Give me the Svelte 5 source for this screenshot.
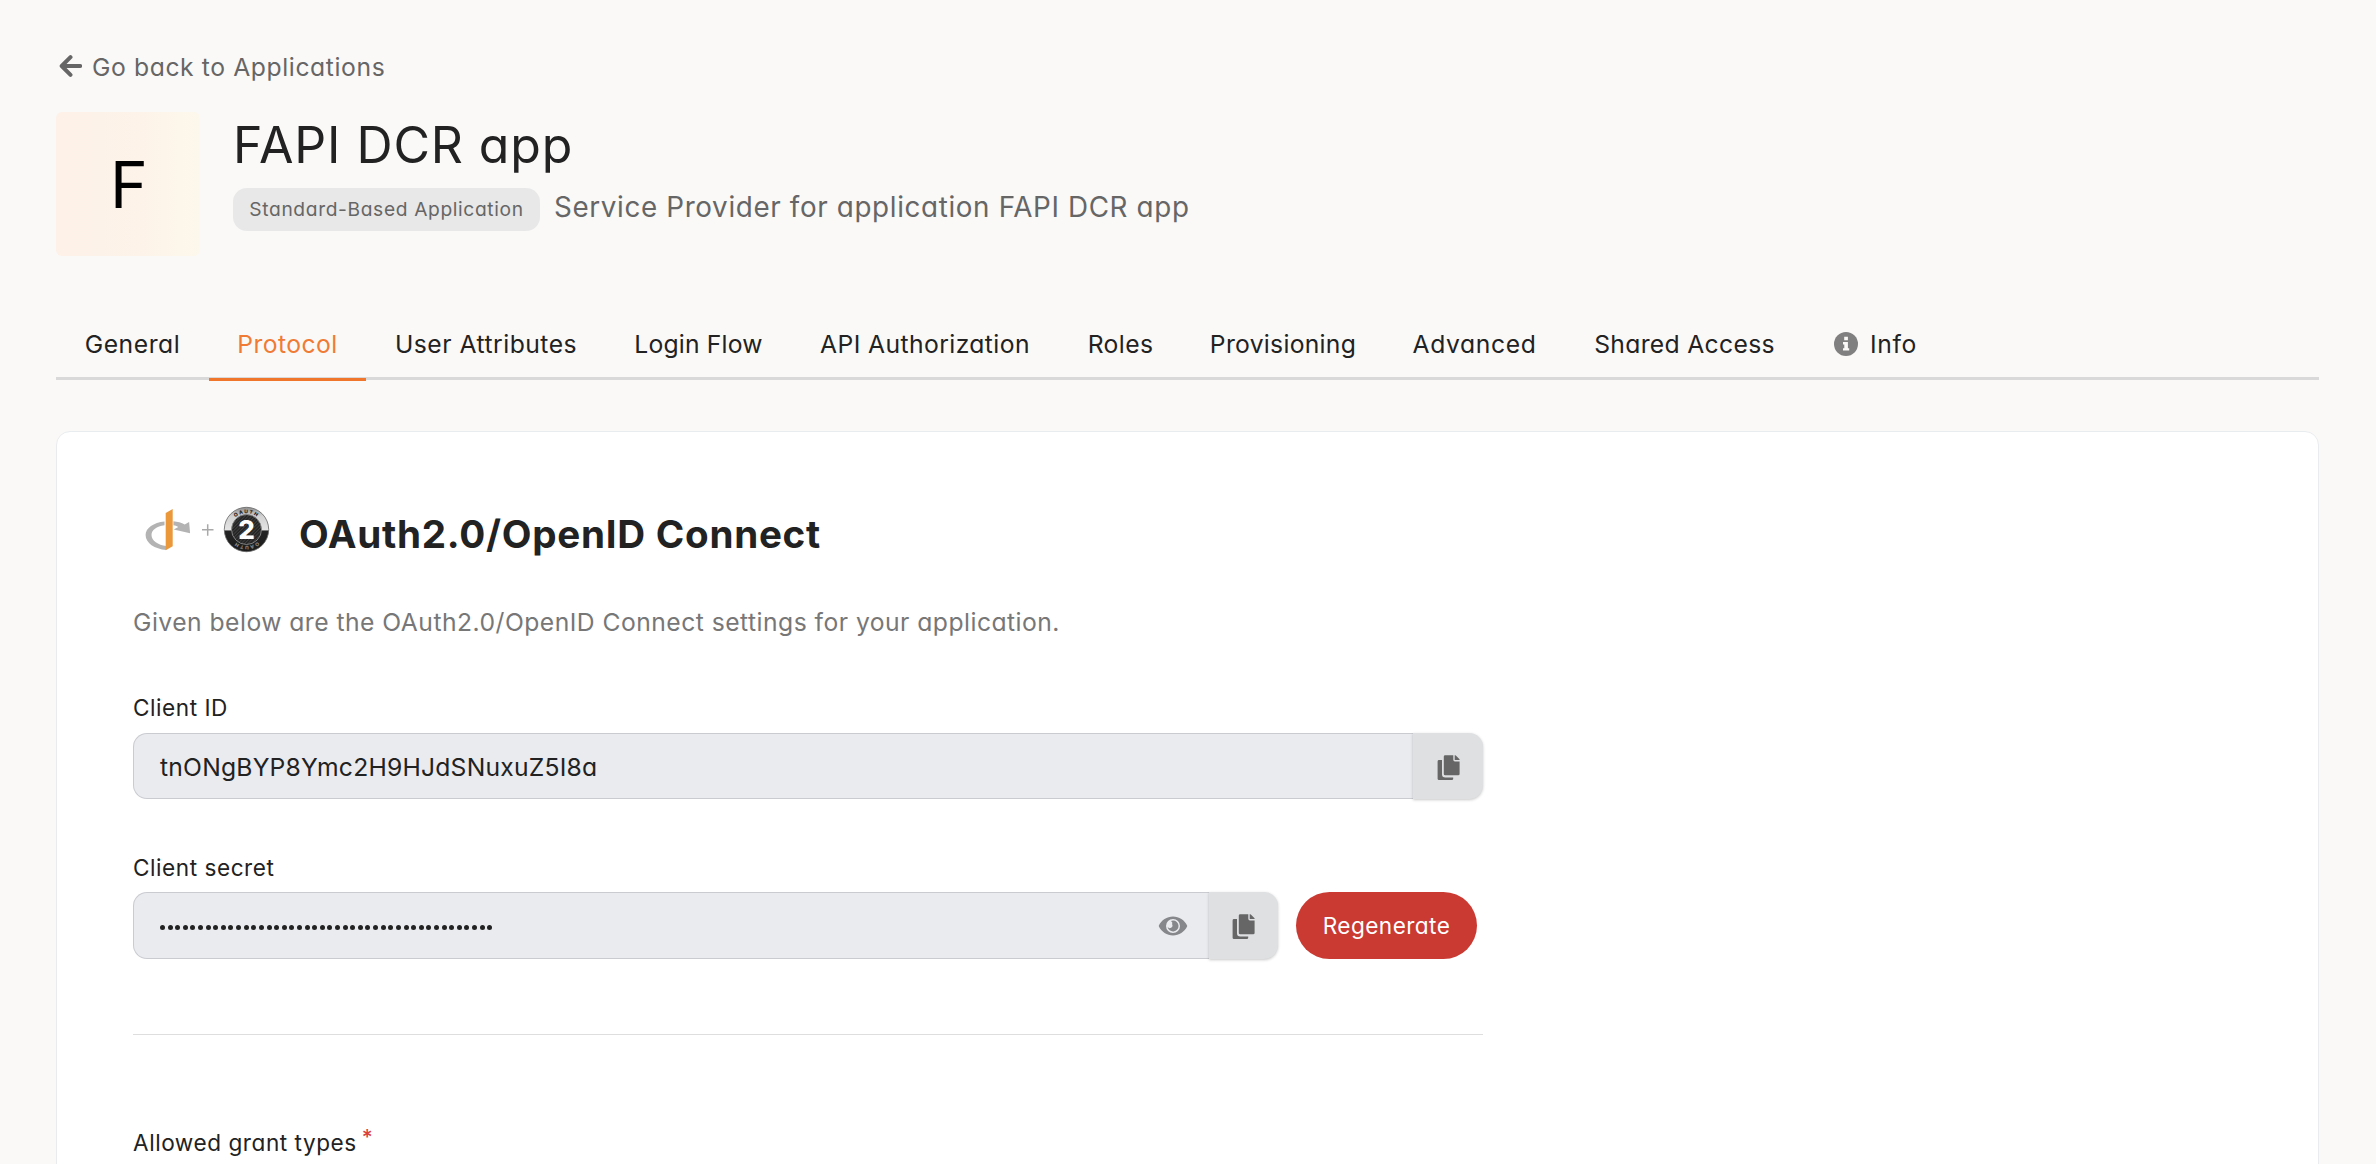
<script>
  // Each tab carries its width and the tracking of its label.
  const tabs = [
    { label: 'General', width: 153, track: 0.55 },
    { label: 'Protocol', width: 157, track: 0.45 },
    { label: 'User Attributes', width: 240, track: 0.49 },
    { label: 'Login Flow', width: 185, track: 0.2 },
    { label: 'API Authorization', width: 268, track: 0.4 },
    { label: 'Roles', width: 123, track: 0.4 },
    { label: 'Provisioning', width: 202, track: 0.28 },
    { label: 'Advanced', width: 181, track: 0.62 },
    { label: 'Shared Access', width: 239, track: 0.32 },
    { label: 'Info', width: 143, track: 0.6, icon: true }
  ];
  let active = $state('Protocol');
  const secretDots = Array.from({ length: 44 }, (_, i) => i);
</script>

{#snippet copyIcon()}
  <svg class="copy-icon" viewBox="0 0 23 26" aria-hidden="true">
    <path d="M2 5h3v14.2A3.3 3.3 0 0 0 8.3 22.500H16.200V23.700A1.400 1.400 0 0 1 14.800 25.100H2A1.400 1.400 0 0 1 .6 23.700V6.400A1.400 1.400 0 0 1 2 5z" />
    <path d="M8.200.2h8.100v4.600a1.600 1.600 0 0 0 1.600 1.600h4.700v12.500a1.400 1.400 0 0 1-1.400 1.400h-13a1.400 1.400 0 0 1-1.400-1.400V1.600A1.400 1.400 0 0 1 8.200.2z" />
    <path d="M17.700.2h.5q.3 0 .6.3l3.500 3.500q.3.3.3.6v.5h-4.900z" />
  </svg>
{/snippet}

<div class="page">
  <a class="back" href="#applications">
    <svg viewBox="0 0 24 24" aria-hidden="true">
      <path d="M12.500 3.200 3.700 12l8.800 8.800M4 12h18.200" />
    </svg>
    <span>Go back to Applications</span>
  </a>

  <header>
    <div class="avatar">F</div>
    <div class="head-text">
      <h1>FAPI DCR app</h1>
      <div class="sub">
        <span class="pill">Standard-Based Application</span>
        <span class="desc">Service Provider for application FAPI DCR app</span>
      </div>
    </div>
  </header>

  <nav>
    {#each tabs as tab}
      <button
        class="tab"
        class:active={active === tab.label}
        style="width: {tab.width}px; letter-spacing: {tab.track}px"
        onclick={() => (active = tab.label)}
      >
        {#if tab.icon}
          <svg viewBox="0 0 24 24" aria-hidden="true">
            <circle cx="12" cy="12" r="12" />
            <path d="M10.200 4.800h3.700v3.500h-3.700zM9 10h4.900v6.200h1.300v2.400H9v-2.400h1.300v-3.800H9z" />
          </svg>
        {/if}
        <span>{tab.label}</span>
      </button>
    {/each}
  </nav>

  <main>
    <div class="title">
      <svg class="logos" viewBox="143 500 130 60" aria-hidden="true">
        <defs>
          <linearGradient id="rim" x1="0" y1="0" x2="0" y2="1">
            <stop offset="0" stop-color="#8d8d8d" />
            <stop offset=".2" stop-color="#d2d2d2" />
            <stop offset=".5" stop-color="#e4e4e4" />
            <stop offset=".54" stop-color="#242424" />
            <stop offset="1" stop-color="#1c1c1c" />
          </linearGradient>
          <pattern id="mesh" width="2.400" height="2.400" patternUnits="userSpaceOnUse" patternTransform="rotate(45)">
            <rect width="2.400" height="2.400" fill="#202020" />
            <rect width="1.100" height="2.400" fill="#3f3f3f" />
          </pattern>
          <path id="arc-top" d="M230.200 529.500a16.300 16.300 0 0 1 32.600 0" />
          <path id="arc-bottom" d="M262.800 529.500a16.300 16.300 0 0 1-32.600 0" />
        </defs>
        <path
          fill="#b3b3b3"
          d="M164.500 521.400v3.800c-8 1.200-13 4.900-13 9.700 0 5.600 6.500 10 14.700 11.100v4c-11.600-1-20.600-7-20.600-15 0-7.200 8-12.500 18.900-13.600zM173.400 521.300c4.200.4 8 1.500 11.300 3.200l4.400-2.600 1 11.300-16.400-3.600 4.600-2.700c-1.600-.8-3.200-1.300-4.900-1.600z"
        />
        <path fill="#eb983b" d="m165.700 513 7-4v37.300l-7 3.900z" />
        <path stroke="#a9a9a9" stroke-width="1.500" fill="none" d="M202 529.800h11.500M207.700 524.200v11.500" />
        <circle cx="246.500" cy="529.500" r="22.200" fill="url(#rim)" stroke="#666" stroke-width=".8" />
        <circle cx="246.500" cy="529.500" r="15" fill="url(#mesh)" stroke="#888" stroke-width=".9" />
        <text class="ring dark"><textPath href="#arc-top" startOffset="50%" text-anchor="middle">OAUTH</textPath></text>
        <text class="ring light"><textPath href="#arc-bottom" startOffset="50%" text-anchor="middle">OAUTH</textPath></text>
        <text class="two" x="246.500" y="538.900" text-anchor="middle">2</text>
      </svg>
      <h2>OAuth2.0/OpenID Connect</h2>
    </div>

    <p class="intro">Given below are the OAuth2.0/OpenID Connect settings for your application.</p>

    <div class="form">
      <div class="label">Client ID</div>
      <div class="row first">
        <div class="field">tnONgBYP8Ymc2H9HJdSNuxuZ5I8a</div>
        <button class="copy" aria-label="Copy client ID">{@render copyIcon()}</button>
      </div>

      <div class="label">Client secret</div>
      <div class="row second">
        <div class="field">
          <div class="dots">
            {#each secretDots as dot (dot)}<i></i>{/each}
          </div>
          <svg class="eye" viewBox="0 0 30 20" aria-hidden="true">
            <path
              fill-rule="evenodd"
              d="M.7 10C3.400 4 9 .6 15 .6S26.600 4 29.300 10C26.600 16 21 19.400 15 19.400S3.400 16 .7 10zM15 3a7 7 0 1 0 0 14 7 7 0 0 0 0-14z"
            />
            <path d="M15 4.500a5.500 5.500 0 1 1-5.400 6.300 2.600 2.600 0 0 0 4.500-2.600A2.600 2.600 0 0 0 13 4.900 5.500 5.500 0 0 1 15 4.500z" />
          </svg>
        </div>
        <button class="copy" aria-label="Copy client secret">{@render copyIcon()}</button>
        <button class="regenerate">Regenerate</button>
      </div>

      <hr />

      <div class="label">Allowed grant types<sup>*</sup></div>
    </div>
  </main>
</div>

<style>
  :global(body) {
    background: #faf9f8;
    overflow: hidden;
  }
  .page {
    box-sizing: border-box;
    width: 2376px;
    height: 1164px;
    padding: 52px 57px 0 56px;
    display: flex;
    flex-direction: column;
    overflow: hidden;
    color: #222;
    font-family: Inter, sans-serif;
    font-weight: 400;
    font-feature-settings: 'cv11';
    white-space: nowrap;
  }
  .page > * {
    flex: none;
  }
  button {
    font: inherit;
    font-feature-settings: inherit;
    color: inherit;
    border: 0;
    padding: 0;
    background: none;
  }
  .back {
    display: flex;
    align-items: center;
    height: 30px;
    padding-left: 2px;
    font-size: 24.700px;
    line-height: 30px;
    letter-spacing: 0.600px;
    color: #666;
    text-decoration: none;
  }
  .back svg {
    width: 24px;
    height: 24px;
    margin: -3px 10px 0 0;
    fill: none;
    stroke: #666;
    stroke-width: 4;
    stroke-linecap: round;
    stroke-linejoin: round;
  }
  .back span {
    margin-top: -1px;
  }
  header {
    display: flex;
    height: 144px;
    margin-top: 30px;
  }
  .avatar {
    width: 144px;
    height: 144px;
    border-radius: 6px;
    background: linear-gradient(90deg, #fdf1e8, #fdf3e9 60%, #fdf8ec);
    color: #000;
    font-size: 64px;
    line-height: 146px;
    text-align: center;
    text-indent: 2px;
  }
  .head-text {
    padding: 3px 0 0 33px;
  }
  h1 {
    margin: 0;
    font-size: 50px;
    line-height: 60px;
    font-weight: 400;
    letter-spacing: 0.900px;
  }
  .sub {
    display: flex;
    margin-top: 13px;
    color: #666;
  }
  .pill {
    box-sizing: border-box;
    width: 307px;
    height: 43px;
    border-radius: 14px;
    background: #e8e8e8;
    text-align: center;
    font-size: 19.200px;
    line-height: 43px;
    letter-spacing: 0.640px;
  }
  .desc {
    margin-left: 14px;
    font-size: 27.800px;
    line-height: 38px;
    letter-spacing: 0.640px;
  }
  nav {
    box-sizing: border-box;
    display: flex;
    height: 69px;
    margin-top: 55px;
    border-bottom: 3px solid #d9d9d9;
  }
  .tab {
    flex: none;
    box-sizing: border-box;
    display: flex;
    align-items: center;
    justify-content: center;
    height: 70px;
    padding: 0 0 1px;
    border-bottom: 3px solid transparent;
    font-size: 24.700px;
  }
  .tab.active {
    color: #f07b35;
    border-bottom-color: #f0762b;
  }
  .tab svg {
    width: 24px;
    height: 24px;
    margin-right: 12px;
    fill: #808080;
  }
  .tab svg path {
    fill: #faf9f8;
  }
  main {
    box-sizing: border-box;
    height: 760px;
    margin-top: 51px;
    padding: 68px 76px 0;
    border: 1px solid #e9ecee;
    border-radius: 14px;
    background: #fff;
  }
  .title {
    display: flex;
    height: 60px;
  }
  .logos {
    width: 130px;
    height: 60px;
    margin: 0 26px 0 10px;
  }
  .ring {
    font-size: 5px;
    font-weight: 800;
    letter-spacing: 1.200px;
  }
  .dark {
    fill: #222;
  }
  .light {
    fill: #888;
  }
  .two {
    font-size: 26px;
    font-weight: 800;
    letter-spacing: 0;
    fill: #fff;
  }
  h2 {
    margin: 0;
    font-size: 38.600px;
    line-height: 69px;
    font-weight: 700;
    letter-spacing: 0.730px;
  }
  .intro {
    margin: 47px 0 0;
    color: #777;
    font-size: 24.700px;
    line-height: 31px;
    letter-spacing: 0.465px;
  }
  .form {
    width: 1350px;
    margin-top: 57px;
  }
  .label {
    height: 26px;
    font-size: 22.600px;
    line-height: 26px;
    letter-spacing: 0.540px;
  }
  .label sup {
    margin-left: 5px;
    font-size: 21px;
    font-weight: 500;
    line-height: 0;
    vertical-align: 6px;
    color: #db3f3a;
  }
  .row {
    display: flex;
    align-items: flex-start;
  }
  .first {
    height: 67px;
    margin: 12px 0 55px;
  }
  .second {
    height: 68px;
    margin: 11px 0 74px;
  }
  .field {
    flex: 1;
    box-sizing: border-box;
    display: flex;
    align-items: center;
    justify-content: space-between;
    height: 66px;
    padding: 2px 21px 0 26px;
    border: 1px solid #cacbd0;
    border-right: 0;
    border-radius: 14px 0 0 14px;
    background: #eaebef;
    font-size: 24.700px;
    letter-spacing: 0.200px;
  }
  .second .field {
    height: 67px;
  }
  .copy {
    display: flex;
    align-items: center;
    justify-content: center;
    width: 70px;
    height: 66px;
    border-radius: 0 14px 14px 0;
    background: #dfe0e2;
    box-shadow: 0 1px 3px rgba(0, 0, 0, 0.220);
  }
  .second .copy {
    width: 69px;
    height: 67px;
  }
  .copy-icon {
    width: 23px;
    height: 26px;
    margin: 3px 0 0;
    fill: #666;
  }
  .dots {
    display: flex;
    gap: 2.610px;
    margin-top: 1px;
  }
  .dots i {
    width: 5px;
    height: 5px;
    border-radius: 50%;
    background: #222;
  }
  .eye {
    width: 30px;
    height: 20px;
    margin-top: -2px;
    fill: #85878a;
  }
  .regenerate {
    width: 181px;
    height: 67px;
    margin: 0 6px 0 18px;
    border-radius: 34px;
    background: #ca3a33;
    color: #fff;
    font-size: 22.600px;
    letter-spacing: 0.450px;
  }
  hr {
    height: 1px;
    margin: 0 0 95px;
    border: 0;
    background: #dedede;
  }
</style>
